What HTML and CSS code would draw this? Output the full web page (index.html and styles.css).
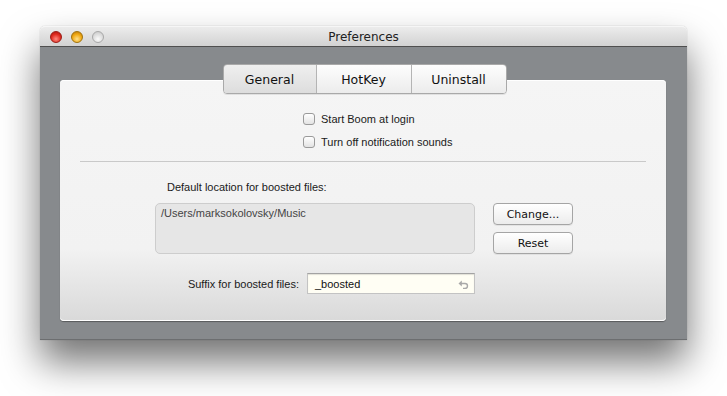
FILE: index.html
```html
<!DOCTYPE html>
<html>
  <head>
    <meta charset="utf-8" />
    <title>Preferences</title>
    <link rel="stylesheet" href="styles.css">
  </head>
  <body>
    <div class="window">
      <div class="titlebar">
        <div class="lights">
          <span class="light red"></span>
          <span class="light yellow"></span>
          <span class="light grey"></span>
        </div>
        <div class="title">Preferences</div>
      </div>

      <div class="content">
        <div class="tabs">
          <div class="tab selected">General</div>
          <div class="tab">HotKey</div>
          <div class="tab">Uninstall</div>
        </div>

        <div class="panel">
          <div class="checks">
            <label class="check"><span class="box"></span>Start Boom at login</label>
            <label class="check"><span class="box"></span>Turn off notification sounds</label>
          </div>

          <hr class="separator">

          <div class="location">
            <div class="location-label">Default location for boosted files:</div>
            <div class="location-row">
              <div class="path-box">/Users/marksokolovsky/Music</div>
              <div class="path-buttons">
                <button class="button">Change...</button>
                <button class="button">Reset</button>
              </div>
            </div>
          </div>

          <div class="suffix-row">
            <div class="suffix-label">Suffix for boosted files:</div>
            <div class="suffix-input">
              <span>_boosted</span>
              <svg class="undo" width="11" height="9" viewBox="0 0 11 9">
                <path d="M3 3.5 H7 A2.5 2.5 0 0 1 7 8.5 H5" fill="none" stroke="#a9a9a9" stroke-width="1.4"/>
                <path d="M0.5 3.5 L3.8 0.6 L3.8 6.4 Z" fill="#a9a9a9"/>
              </svg>
            </div>
          </div>
        </div>
      </div>
    </div>
  </body>
</html>
```

FILE: styles.css
```css
html, body {
  min-height: 100%;
}

body {
  margin: 0;
  min-height: 396px;
  padding-top: 26px;
  box-sizing: border-box;
  background: #ffffff;
  font-family: "Liberation Sans", Arial, sans-serif;
  color: #1a1a1a;
}

.window {
  margin-left: 40px;
  width: 647px;
  border-radius: 5px 5px 0 0;
  box-shadow: 0 22px 38px rgba(0, 0, 0, 0.55), 0 0 1px rgba(0, 0, 0, 0.35);
}

.titlebar {
  height: 21px;
  display: flex;
  align-items: center;
  position: relative;
  background: linear-gradient(#ececec, #d2d2d2);
  border-radius: 5px 5px 0 0;
  border-top: 1px solid #f6f6f6;
  border-bottom: 1px solid #4f4f4f;
  box-sizing: border-box;
}

.lights {
  display: flex;
  gap: 9px;
  margin-left: 10px;
}

.light {
  width: 12px;
  height: 12px;
  border-radius: 50%;
  box-sizing: border-box;
}

.red {
  background: radial-gradient(circle at 50% 70%, #ff8a80, #e02b20 55%, #a5120b);
  border: 1px solid #9b1c16;
}

.yellow {
  background: radial-gradient(circle at 50% 70%, #ffe08a, #f0a812 55%, #b4710a);
  border: 1px solid #a0720c;
}

.grey {
  background: radial-gradient(circle at 50% 70%, #fbfbfb, #dadada 60%, #c4c4c4);
  border: 1px solid #a8a8a8;
}

.title {
  position: absolute;
  left: 0;
  right: 0;
  text-align: center;
  font-family: "DejaVu Sans", sans-serif;
  font-size: 12px;
  color: #222;
  pointer-events: none;
}

.content {
  background: #878a8d;
  height: 293px;
  padding: 17px 21px 0 20px;
  box-sizing: border-box;
  display: flex;
  flex-direction: column;
  border-bottom: 1px solid #6c6e70;
}

.tabs {
  display: flex;
  align-self: center;
  margin-left: 3px;
  position: relative;
  z-index: 1;
  border: 1px solid #a9a9a9;
  border-radius: 4px;
  box-shadow: 0 1px 0 rgba(0, 0, 0, 0.08);
  overflow: hidden;
}

.tab {
  width: 94px;
  height: 28px;
  display: flex;
  align-items: center;
  justify-content: center;
  font-family: "DejaVu Sans", sans-serif;
  font-size: 12.5px;
  color: #111;
  background: linear-gradient(#fdfdfd, #ececec);
  border-left: 1px solid #b4b4b4;
}

.tab:first-child {
  border-left: none;
  width: 92px;
}

.tab.selected {
  background: linear-gradient(#efefef, #dddddd);
}

.panel {
  margin-top: -14px;
  height: 241px;
  box-sizing: border-box;
  padding: 30px 20px 0 20px;
  border-radius: 4px;
  background: linear-gradient(#f5f5f5 0%, #f2f2f2 70%, #d9d9d9 100%);
  box-shadow: 0 1px 0 #ffffff inset, 0 -1px 0 #ffffff inset, 0 1px 1px rgba(0, 0, 0, 0.35);
}

.checks {
  display: flex;
  flex-direction: column;
  align-items: flex-start;
  gap: 5px;
  margin-left: 223px;
}

.check {
  display: flex;
  align-items: center;
  height: 18px;
  font-size: 11px;
  color: #1a1a1a;
}

.box {
  width: 12px;
  height: 12px;
  margin-right: 6px;
  border: 1px solid #9a9a9a;
  border-radius: 3px;
  box-sizing: border-box;
  background: linear-gradient(#ffffff, #e3e3e3);
}

.separator {
  margin: 10px 0 0 0;
  border: none;
  border-top: 1px solid #c9c9c9;
}

.location {
  margin: 17px 0 0 75px;
}

.location-label {
  font-size: 11px;
  line-height: 16px;
  margin-left: 12px;
}

.location-row {
  display: flex;
  margin-top: 8px;
  gap: 18px;
}

.path-box {
  width: 320px;
  height: 51px;
  box-sizing: border-box;
  padding: 3px 5px;
  background: #e6e6e6;
  border: 1px solid #cdcdcd;
  border-radius: 5px;
  font-size: 11px;
  color: #444;
}

.path-buttons {
  display: flex;
  flex-direction: column;
  gap: 7px;
}

.button {
  width: 80px;
  height: 22px;
  padding: 0;
  font-family: "DejaVu Sans", sans-serif;
  font-size: 11px;
  color: #111;
  border: 1px solid #a5a5a5;
  border-radius: 4px;
  background: linear-gradient(#ffffff, #ececec);
  box-shadow: 0 1px 0 rgba(0, 0, 0, 0.06);
}

.suffix-row {
  display: flex;
  align-items: center;
  margin-top: 19px;
}

.suffix-label {
  width: 227px;
  text-align: right;
  font-size: 11px;
  padding-right: 8px;
  box-sizing: border-box;
}

.suffix-input {
  width: 168px;
  height: 21px;
  box-sizing: border-box;
  display: flex;
  align-items: center;
  justify-content: space-between;
  padding: 0 5px 0 7px;
  background: #fffef4;
  border: 1px solid #c3c3c3;
  border-top-color: #a3a3a3;
  box-shadow: 0 1px 1px rgba(0, 0, 0, 0.12) inset;
  font-size: 11px;
  color: #111;
}

.undo {
  margin-top: 2px;
}
```
